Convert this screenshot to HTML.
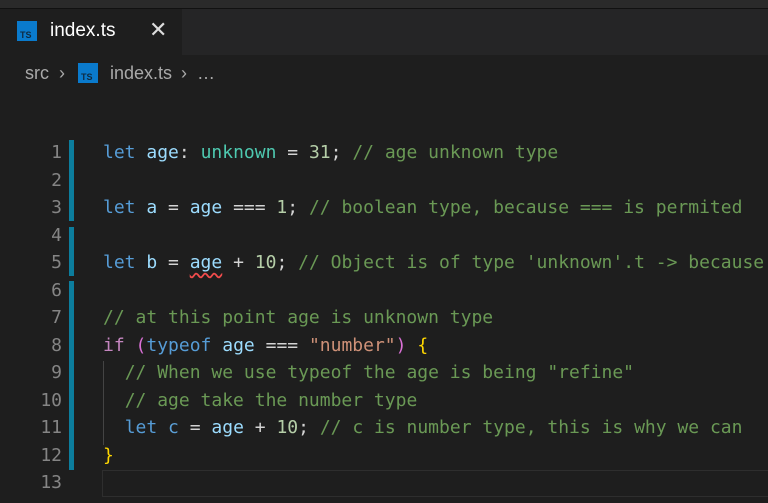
<!DOCTYPE html>
<html><head><style>
body{margin:0;width:768px;height:503px;background:#1e1e1e;overflow:hidden;font-family:"Liberation Sans",sans-serif;position:relative}
.top{position:absolute;left:0;top:0;width:768px;height:8px;background:#2a2a2a;border-bottom:1px solid #111}
.tabbar{position:absolute;left:0;top:9px;width:768px;height:46px;background:#252526}
.tab{position:absolute;left:0;top:0;width:182px;height:46px;background:#1e1e1e}
.ts{position:absolute;width:20px;height:20px;background:#0a7acc;color:#0f2a40;font:bold 9px "Liberation Sans",sans-serif;box-sizing:border-box;padding:9px 0 0 3px;line-height:10px}
.bc{position:absolute;top:63px;font-size:18px;color:#a9a9a9}
.code{position:absolute;left:0;top:0;font-family:"DejaVu Sans Mono",monospace;font-size:18px}
.ln{position:absolute;left:0;width:62px;text-align:right;color:#858585;height:27.5px;line-height:27.5px}
.l{position:absolute;left:103px;white-space:pre;color:#d4d4d4;height:27.5px;line-height:27.5px}
.bar{position:absolute;left:69px;width:5px;background:#0c7d9d}
.k{color:#569cd6}.v{color:#9cdcfe}.t{color:#4ec9b0}.n{color:#b5cea8}.c{color:#6a9955}.s{color:#ce9178}.y{color:#ffd700}.p{color:#c586c0}
</style></head><body>
<div class="top"></div>
<div class="tabbar"><div class="tab">
<div class="ts" style="left:17px;top:12px">TS</div>
<div style="position:absolute;left:50px;top:11px;font-size:19px;color:#fff">index.ts</div>
<div style="position:absolute;left:149px;top:8px;font-size:22px;color:#ddd">✕</div>
</div></div>
<div class="bc" style="left:25px">src</div>
<div class="bc" style="left:59px">›</div>
<div class="ts" style="left:78px;top:63px">TS</div>
<div class="bc" style="left:110px">index.ts</div>
<div class="bc" style="left:181px">›&nbsp; …</div>
<div class="bar" style="top:140px;height:81px"></div>
<div class="bar" style="top:227px;height:49px"></div>
<div class="bar" style="top:281px;height:189px"></div>
<div style="position:absolute;left:103px;top:361px;width:1px;height:84px;background:#444"></div>
<div style="position:absolute;left:102px;top:470px;width:680px;height:27px;border:1px solid #2e2e2e;box-sizing:border-box"></div>
<div class="code">
<div class="ln" style="top:139px">1</div><div class="l" style="top:139px"><span class="k">let</span> <span class="v">age</span>: <span class="t">unknown</span> = <span class="n">31</span>; <span class="c">// age unknown type</span></div>
<div class="ln" style="top:166.5px">2</div>
<div class="ln" style="top:194px">3</div><div class="l" style="top:194px"><span class="k">let</span> <span class="v">a</span> = <span class="v">age</span> === <span class="n">1</span>; <span class="c">// boolean type, because === is permited</span></div>
<div class="ln" style="top:221.5px">4</div>
<div class="ln" style="top:249px">5</div><div class="l" style="top:249px"><span class="k">let</span> <span class="v">b</span> = <span class="v" style="text-decoration:underline wavy #f14c4c;text-underline-offset:4px">age</span> + <span class="n">10</span>; <span class="c">// Object is of type 'unknown'.t -&gt; because</span></div>
<div class="ln" style="top:276.5px">6</div>
<div class="ln" style="top:304px">7</div><div class="l" style="top:304px"><span class="c">// at this point age is unknown type</span></div>
<div class="ln" style="top:331.5px">8</div><div class="l" style="top:331.5px"><span class="p">if</span> <span class="y" style="color:#da70d6">(</span><span class="k">typeof</span> <span class="v">age</span> === <span class="s">"number"</span><span style="color:#da70d6">)</span> <span class="y">{</span></div>
<div class="ln" style="top:359px">9</div><div class="l" style="top:359px">  <span class="c">// When we use typeof the age is being "refine"</span></div>
<div class="ln" style="top:386.5px">10</div><div class="l" style="top:386.5px">  <span class="c">// age take the number type</span></div>
<div class="ln" style="top:414px">11</div><div class="l" style="top:414px">  <span class="k">let</span> <span style="color:#5b9fd6">c</span> = <span class="v">age</span> + <span class="n">10</span>; <span class="c">// c is number type, this is why we can</span></div>
<div class="ln" style="top:441.5px">12</div><div class="l" style="top:441.5px"><span class="y">}</span></div>
<div class="ln" style="top:469px">13</div>
</div>
</body></html>
